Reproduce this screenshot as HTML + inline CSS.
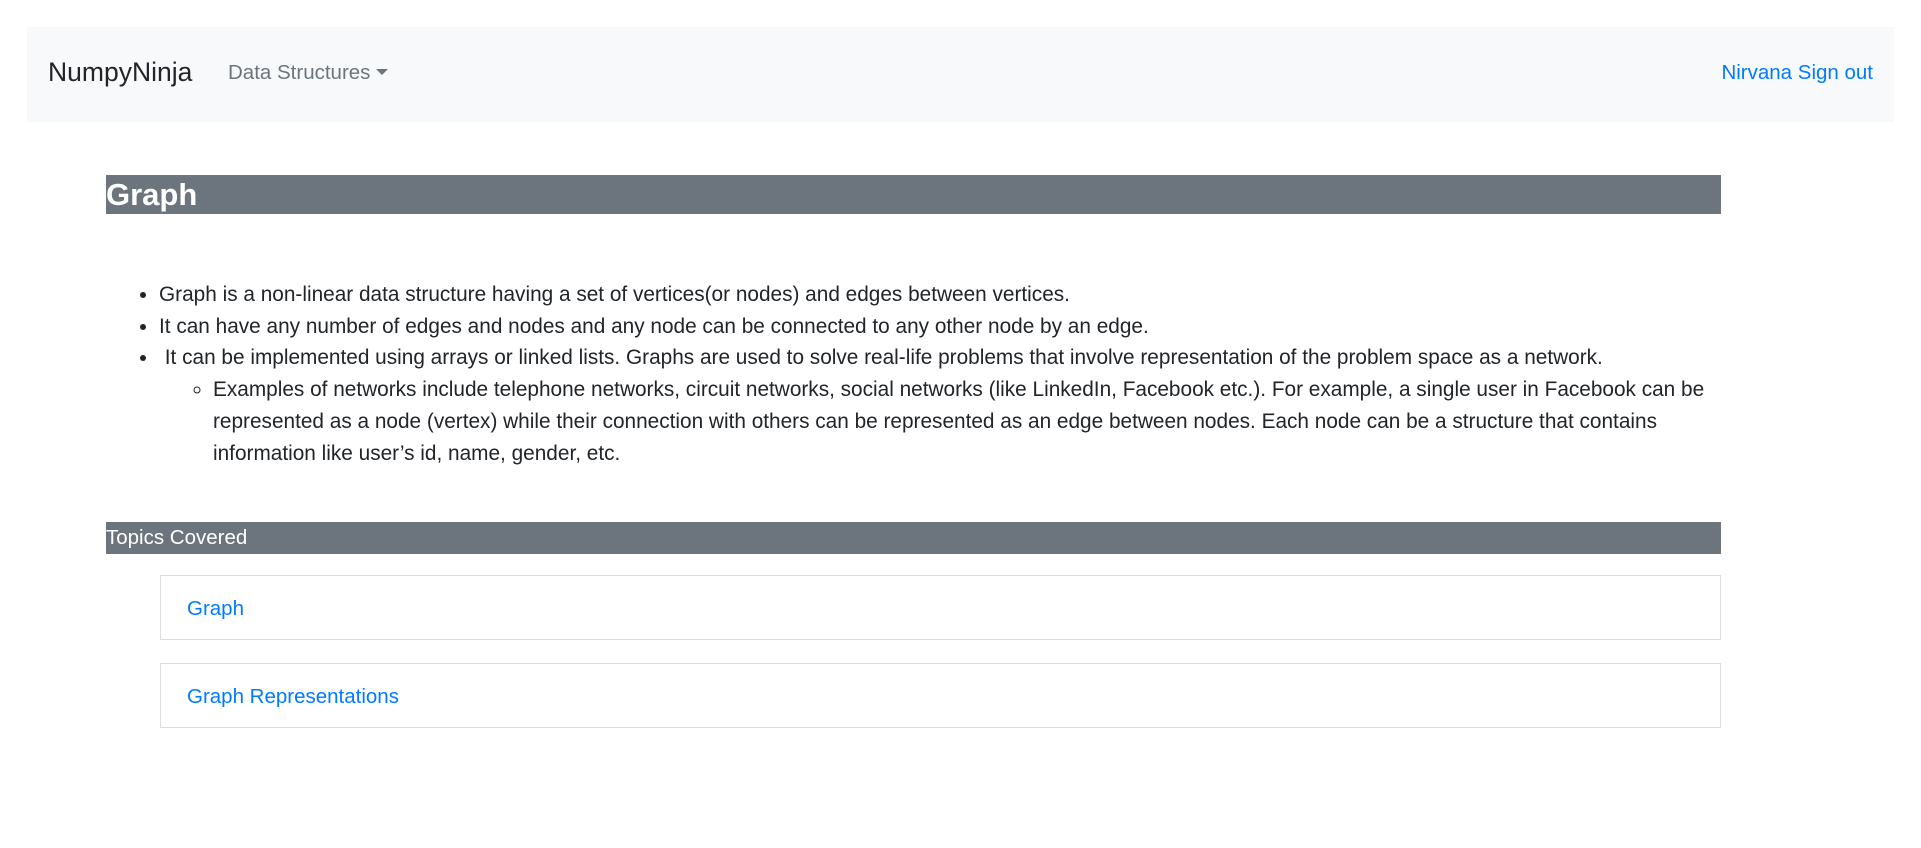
<!DOCTYPE html>
<html><head><style>
body{margin:0;width:1921px;height:848px;background:#fff;font-family:"Segoe UI","Liberation Sans",sans-serif;color:#212529;position:relative;overflow:hidden}
.nav{position:absolute;left:27px;top:27px;width:1867px;height:95px;background:#f8f9fa}
.brand{position:absolute;left:21px;top:30px;font-size:26.5px;color:#212529}
.dd{position:absolute;left:201px;top:34px;font-size:20.5px;color:#6c757d}
.dd:after{content:"";display:inline-block;margin-left:6px;vertical-align:4px;border-top:6px solid #6c757d;border-left:6px solid transparent;border-right:6px solid transparent}
.so{position:absolute;right:21px;top:34px;font-size:20.5px;color:#007bff}
.h{position:absolute;left:106px;width:1615px;background:#6c757d;color:#fff}
.h1{top:175px;height:39px;font-size:31px;font-weight:bold;line-height:39px}
.h2{top:522px;height:32px;font-size:20.5px;line-height:32px}
ul{position:absolute;left:0;margin:0;padding-left:159px;font-size:20.8px;line-height:31.7px;width:1700px;white-space:nowrap}
ul ul{position:static;padding-left:54px;list-style:circle;width:auto}
.card{position:absolute;left:160px;width:1559px;height:63px;border:1px solid #ddd;color:#007bff;font-size:20.5px;line-height:66px;text-indent:26px}
</style></head><body>
<div class="nav"><span class="brand">NumpyNinja</span><span class="dd">Data Structures</span><span class="so">Nirvana Sign out</span></div>
<div class="h h1">Graph</div>
<ul style="top:279px">
<li>Graph is a non-linear data structure having a set of vertices(or nodes) and edges between vertices.</li>
<li>It can have any number of edges and nodes and any node can be connected to any other node by an edge.</li>
<li>&nbsp;It can be implemented using arrays or linked lists. Graphs are used to solve real-life problems that involve representation of the problem space as a network.
<ul><li>Examples of networks include telephone networks, circuit networks, social networks (like LinkedIn, Facebook etc.). For example, a single user in Facebook can be<br>represented as a node (vertex) while their connection with others can be represented as an edge between nodes. Each node can be a structure that contains<br>information like user’s id, name, gender, etc.</li></ul></li>
</ul>
<div class="h h2">Topics Covered</div>
<div class="card" style="top:575px">Graph</div>
<div class="card" style="top:663px">Graph Representations</div>
</body></html>
